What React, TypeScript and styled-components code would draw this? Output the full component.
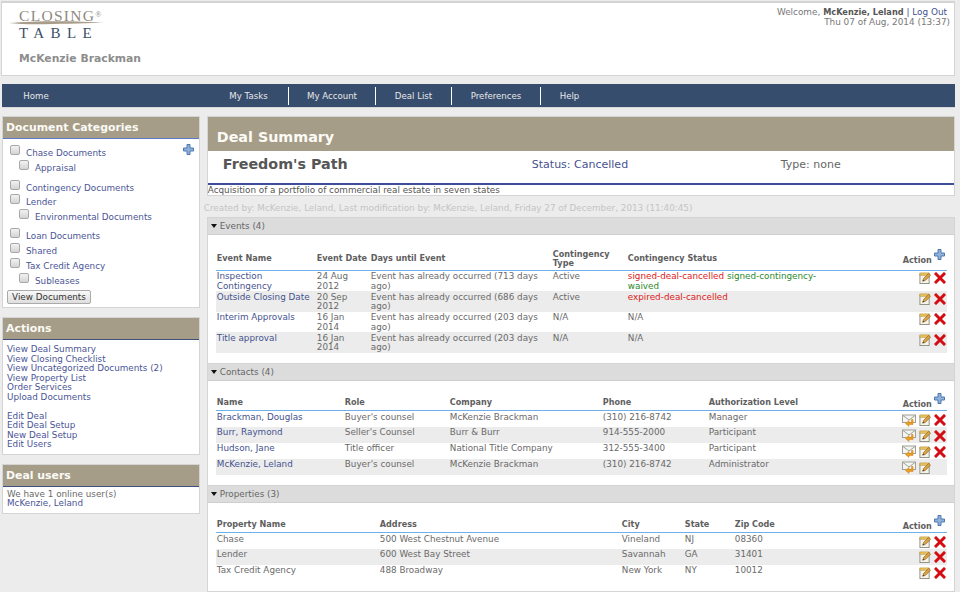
import React from 'react';
import styled, { createGlobalStyle } from 'styled-components';

const GlobalStyle = createGlobalStyle`
    html, body { margin: 0; padding: 0; background: #ececec; }
    body { width: 960px; height: 592px; overflow: hidden; font-family: "DejaVu Sans", Verdana, sans-serif; font-size: 8.8px; line-height: 9.5px; color: #6a6a6a; }
`;

const Page = styled.div`
    display: flex;
    flex-direction: column;
    padding: 1px 5px 0 1px;
`;

const Header = styled.header`
    height: 75px;
    box-sizing: border-box;
    background: #fff;
    border: 1px solid #d4d4d4;
    border-top-width: 2px;
    display: flex;
    justify-content: space-between;
    padding: 0 4px 0 9px;
`;

const LogoBox = styled.div`
    display: flex;
    flex-direction: column;
    padding-top: 6px;
`;

const Logo = styled.div`
    position: relative;
    width: 96px;
    height: 31.5px;
    font-family: "Liberation Serif", serif;
`;

const LogoTop = styled.div`
    font-size: 15.5px;
    line-height: 14px;
    letter-spacing: 1.3px;
    color: #8e8a80;
    padding-left: 8px;
    white-space: nowrap;
    sup { font-size: 8px; line-height: 0; letter-spacing: 0; vertical-align: 4px; }
`;

const LogoBottom = styled.div`
    font-size: 15px;
    line-height: 15px;
    letter-spacing: 6.4px;
    color: #3c5068;
    padding: 2.5px 0 0 8px;
`;

const Swoosh = styled.svg`
    position: absolute;
    left: -2px;
    top: 11px;
`;

const FirmName = styled.div`
    margin: 11px 0 0 8px;
    font-size: 10.8px;
    line-height: 14px;
    font-weight: bold;
    color: #8d8d8d;
`;

const Welcome = styled.div`
    padding-top: 5px;
    text-align: right;
    color: #777;
    font-size: 8.9px;
    b { color: #555; font-size: 8.2px; }
    a { color: #44508f; padding-right: 3px; }
`;

const Nav = styled.nav`
    margin: 8px 0 0 1px;
    height: 23px;
    background: #364d6e;
    display: flex;
    align-items: center;
    border: 1px solid #d8d8d8;
    border-width: 0 0 1px;
`;

const NavItem = styled.a<{ $w: number; $sep?: boolean }>`
    width: ${p => p.$w}px;
    box-sizing: border-box;
    height: 18px;
    line-height: 18px;
    text-align: center;
    color: #e8e8e8;
    font-size: 8.6px;
    border-right: ${p => (p.$sep ? '1px solid #fff' : '0')};
`;

const NavSpacer = styled.div`
    width: 139px;
`;

const Columns = styled.div`
    display: flex;
    gap: 7px;
    margin: 8px 0 0 1px;
    align-items: flex-start;
`;

const Sidebar = styled.aside`
    width: 198px;
    display: flex;
    flex-direction: column;
    gap: 9px;
`;

const Panel = styled.section`
    background: #fff;
    border: 1px solid #d4d4d4;
    box-sizing: border-box;
`;

const PanelTitle = styled.h3<{ $line: string }>`
    margin: 0;
    height: 22px;
    line-height: 21px;
    box-sizing: border-box;
    padding-left: 3px;
    background: #a69d88;
    border-bottom: 1px solid ${p => p.$line};
    color: #fbfaf5;
    font-size: 10.9px;
    font-weight: bold;
`;

const PanelBody = styled.div`
    position: relative;
    padding: 5px 4px 4px;
    a { color: #4a5596; }
`;

const UsersBody = styled(PanelBody)`
    padding-top: 3px;
`;

const CategoryBody = styled(PanelBody)`
    height: 168px;
    box-sizing: border-box;
    padding-top: 6px;
`;

const Category = styled.div<{ $sub?: boolean; $gap?: number }>`
    display: flex;
    align-items: flex-start;
    gap: 6px;
    height: 15px;
    margin-left: ${p => (p.$sub ? 12 : 3)}px;
    margin-top: ${p => p.$gap ?? 0}px;
    a { padding-top: 4px; }
`;

const Check = styled.span`
    width: 8px;
    height: 8px;
    flex: none;
    border: 1px solid #a8a8a8;
    border-radius: 2px;
    background: linear-gradient(#f2f2f2, #d4d4d4);
`;

const SideAdd = styled.span`
    position: absolute;
    right: 5px;
    top: 5px;
    line-height: 0;
`;

const ViewButton = styled.button`
    display: block;
    margin: 2px 0 0 0;
    width: 84px;
    height: 14px;
    padding: 0;
    font: inherit;
    line-height: 11px;
    color: #333;
    background: linear-gradient(#f8f8f8, #dedede);
    border: 1px solid #aaa;
    border-radius: 2px;
`;

const LinkList = styled.div<{ $gap?: boolean }>`
    display: flex;
    flex-direction: column;
    margin-top: ${p => (p.$gap ? 9.5 : 0)}px;
`;

const Main = styled.main`
    width: 749px;
    display: flex;
    flex-direction: column;
`;

const SummaryTitle = styled.h2`
    margin: 0;
    height: 34px;
    box-sizing: border-box;
    padding: 11px 0 0 9px;
    background: #a69d88;
    color: #fbfaf5;
    font-size: 14.3px;
    line-height: 18px;
`;

const DealRow = styled.div`
    display: flex;
    align-items: center;
    height: 34px;
    box-sizing: border-box;
    padding: 0 0 4px 15px;
    border-bottom: 2px solid #3d4f99;
    font-size: 11px;
    color: #46528f;
`;

const DealName = styled.div`
    width: 309px;
    font-size: 14.3px;
    font-weight: bold;
    color: #565656;
`;

const DealStatus = styled.div`
    width: 249px;
`;

const DealType = styled.div`
    color: #666;
`;

const DealNote = styled.div`
    height: 10px;
    line-height: 11px;
    color: #555;
`;

const Created = styled.div`
    margin: 8px 0 3px -3px;
    color: #c4c4c4;
`;

const Section = styled.section`
    background: #fff;
    border: 1px solid #d4d4d4;
    border-width: 1px 1px 0;
    padding-bottom: 10px;
    &:last-child {
        border-bottom-width: 1px;
    }
`;

const SectionHead = styled.div`
    height: 16px;
    background: #dcdcdc;
    border-bottom: 1px solid #cfcfcf;
    line-height: 16px;
    padding-left: 3px;
    color: #666;
    display: flex;
    align-items: center;
    gap: 3px;
    &::before {
        content: '';
        border: 3.5px solid transparent;
        border-top: 4px solid #111;
        border-bottom: 0;
    }
`;

const Table = styled.table`
    table-layout: fixed;
    width: 731px;
    margin: 14px 0 0 8px;
    border-collapse: collapse;
    border-spacing: 0;
`;

const Col = styled.col<{ $w: number }>`
    width: ${p => p.$w}px;
`;

const Th = styled.th<{ $right?: boolean }>`
    height: 16px;
    padding: 1px;
    box-sizing: border-box;
    vertical-align: middle;
    text-align: ${p => (p.$right ? 'right' : 'left')};
    font-weight: bold;
    color: #5e5e5e;
    border-bottom: 1px solid #6db0ea;
    font-size: 8.1px;
`;

const Row = styled.tr<{ $alt: boolean; $h: number }>`
    height: ${p => p.$h}px;
    background: ${p => (p.$alt ? '#ececec' : '#fff')};
`;

const Td = styled.td`
    padding: 1.5px 3px 0 1px;
    vertical-align: top;
    a { color: #46528f; }
`;

const Actions = styled.div<{ $top: number }>`
    display: flex;
    justify-content: flex-end;
    align-items: center;
    gap: 3px;
    padding-top: ${p => p.$top}px;
    margin-right: -2px;
`;

const ActionHead = styled.div`
    position: relative;
    display: inline-block;
    padding-right: 14px;
    margin-top: 4px;
    span { line-height: 0; position: absolute; right: 1px; top: -7px; }
`;

const Red = styled.span`
    color: #dd2020;
`;

const Green = styled.span`
    color: #2b8a2b;
`;

const PlusIcon = () => (
    <svg width="11" height="11" viewBox="0 0 11 11">
        <path d="M4 .5h3V4h3.5v3H7v3.5H4V7H.5V4H4z" fill="#8eb1da" stroke="#4f78b0" strokeWidth="1" />
    </svg>
);

const EditIcon = () => (
    <svg width="12" height="12" viewBox="0 0 13 13">
        <rect x="1" y="2" width="10" height="10.5" fill="#f5f3ea" stroke="#8c8c80" />
        <rect x="1" y="1" width="10" height="2.5" fill="#e8c25a" stroke="#b8913a" strokeWidth=".6" />
        <path d="M4 10l1-3 5.5-5.5 2 2L7 9z" fill="#d9a441" stroke="#8a5c1c" strokeWidth=".7" />
        <path d="M4 10l.5-1.6 1.2 1.1z" fill="#333" />
    </svg>
);

const DeleteIcon = () => (
    <svg width="12" height="12" viewBox="0 0 12 12">
        <path d="M2 2l8 8M10 2l-8 8" stroke="#d40d12" strokeWidth="3" strokeLinecap="square" />
    </svg>
);

const MailIcon = () => (
    <svg width="14" height="13" viewBox="0 0 14 13">
        <rect x=".5" y="1" width="13" height="7.5" fill="#f4f4f0" stroke="#a0a098" />
        <path d="M1 1.5l6 4.5 6-4.5" fill="none" stroke="#a0a098" />
        <path d="M9.5 5.5v3H7V6.5L3.5 9.5 7 12.5V10.5h4V5.5z" fill="#f0a020" stroke="#cc7a10" strokeWidth=".5" />
    </svg>
);

const RowActions = ({ mail, del = true, top = 1 }: { mail?: boolean; del?: boolean; top?: number }) => (
    <Actions $top={top}>
        {mail && <MailIcon />}
        <EditIcon />
        {del ? <DeleteIcon /> : <svg width="12" height="12" />}
    </Actions>
);

const ActionHeader = () => (
    <ActionHead>
        Action
        <span><PlusIcon /></span>
    </ActionHead>
);

const docCategories = [
    { name: 'Chase Documents' },
    { name: 'Appraisal', sub: true },
    { name: 'Contingency Documents', gap: 5 },
    { name: 'Lender', gap: -1 },
    { name: 'Environmental Documents', sub: true },
    { name: 'Loan Documents', gap: 4 },
    { name: 'Shared' },
    { name: 'Tax Credit Agency' },
    { name: 'Subleases', sub: true },
];

const events = [
    ['Inspection Contingency', '24 Aug 2012', 'Event has already occurred (713 days ago)', 'Active'],
    ['Outside Closing Date', '20 Sep 2012', 'Event has already occurred (686 days ago)', 'Active'],
    ['Interim Approvals', '16 Jan 2014', 'Event has already occurred (203 days ago)', 'N/A'],
    ['Title approval', '16 Jan 2014', 'Event has already occurred (203 days ago)', 'N/A'],
];

const contacts = [
    ['Brackman, Douglas', "Buyer's counsel", 'McKenzie Brackman', '(310) 216-8742', 'Manager'],
    ['Burr, Raymond', "Seller's Counsel", 'Burr & Burr', '914-555-2000', 'Participant'],
    ['Hudson, Jane', 'Title officer', 'National Title Company', '312-555-3400', 'Participant'],
    ['McKenzie, Leland', "Buyer's counsel", 'McKenzie Brackman', '(310) 216-8742', 'Administrator'],
];

const properties = [
    ['Chase', '500 West Chestnut Avenue', 'Vineland', 'NJ', '08360'],
    ['Lender', '600 West Bay Street', 'Savannah', 'GA', '31401'],
    ['Tax Credit Agency', '488 Broadway', 'New York', 'NY', '10012'],
];

const statusCell = (i: number) => {
    if (i === 0) {
        return <><Red>signed-deal-cancelled</Red> <Green>signed-contingency-</Green><br /><Green>waived</Green></>;
    }
    if (i === 1) return <Red>expired-deal-cancelled</Red>;
    return 'N/A';
};

export default function App() {
    return (
        <Page>
            <GlobalStyle />
            <Header>
                <LogoBox>
                    <Logo>
                        <LogoTop>CLOSING<sup>®</sup></LogoTop>
                        <Swoosh width="96" height="6" viewBox="0 0 96 6">
                            <path d="M0 3C25 .5 70 .5 96 3 70 2.500 25 6 0 3z" fill="#a89c8a" />
                        </Swoosh>
                        <LogoBottom>TABLE</LogoBottom>
                    </Logo>
                    <FirmName>McKenzie Brackman</FirmName>
                </LogoBox>
                <Welcome>
                    Welcome, <b>McKenzie, Leland</b> <a>| Log Out</a><br />
                    Thu 07 of Aug, 2014 (13:37)
                </Welcome>
            </Header>

            <Nav>
                <NavItem $w={68}>Home</NavItem>
                <NavSpacer />
                <NavItem $w={80} $sep>My Tasks</NavItem>
                <NavItem $w={87} $sep>My Account</NavItem>
                <NavItem $w={76} $sep>Deal List</NavItem>
                <NavItem $w={89} $sep>Preferences</NavItem>
                <NavItem $w={57}>Help</NavItem>
            </Nav>

            <Columns>
                <Sidebar>
                    <Panel>
                        <PanelTitle $line="#5f78c8">Document Categories</PanelTitle>
                        <CategoryBody>
                            <SideAdd><PlusIcon /></SideAdd>
                            {docCategories.map(c => (
                                <Category key={c.name} $sub={c.sub} $gap={c.gap}>
                                    <Check />
                                    <a>{c.name}</a>
                                </Category>
                            ))}
                            <ViewButton>View Documents</ViewButton>
                        </CategoryBody>
                    </Panel>
                    <Panel>
                        <PanelTitle $line="#3d4f7a">Actions</PanelTitle>
                        <PanelBody>
                            <LinkList>
                                <a>View Deal Summary</a>
                                <a>View Closing Checklist</a>
                                <a>View Uncategorized Documents (2)</a>
                                <a>View Property List</a>
                                <a>Order Services</a>
                                <a>Upload Documents</a>
                            </LinkList>
                            <LinkList $gap>
                                <a>Edit Deal</a>
                                <a>Edit Deal Setup</a>
                                <a>New Deal Setup</a>
                                <a>Edit Users</a>
                            </LinkList>
                        </PanelBody>
                    </Panel>
                    <Panel>
                        <PanelTitle $line="#3d4f7a">Deal users</PanelTitle>
                        <UsersBody>
                            We have 1 online user(s)<br />
                            <a>McKenzie, Leland</a>
                        </UsersBody>
                    </Panel>
                </Sidebar>

                <Main>
                    <Panel>
                        <SummaryTitle>Deal Summary</SummaryTitle>
                        <DealRow>
                            <DealName>Freedom's Path</DealName>
                            <DealStatus>Status: Cancelled</DealStatus>
                            <DealType>Type: none</DealType>
                        </DealRow>
                        <DealNote>Acquisition of a portfolio of commercial real estate in seven states</DealNote>
                    </Panel>
                    <Created>Created by: McKenzie, Leland, Last modification by: McKenzie, Leland, Friday 27 of December, 2013 (11:40:45)</Created>

                    <Section>
                        <SectionHead>Events (4)</SectionHead>
                        <Table>
                            <colgroup>
                                <Col $w={100} /><Col $w={54} /><Col $w={182} /><Col $w={75} /><Col $w={200} /><Col $w={120} />
                            </colgroup>
                            <thead>
                                <tr>
                                    <Th>Event Name</Th><Th>Event Date</Th><Th>Days until Event</Th><Th>Contingency Type</Th><Th>Contingency Status</Th>
                                    <Th $right><ActionHeader /></Th>
                                </tr>
                            </thead>
                            <tbody>
                                {events.map((e, i) => (
                                    <Row key={e[0]} $alt={i % 2 === 1} $h={20.6}>
                                        <Td><a>{e[0]}</a></Td>
                                        <Td>{e[1]}</Td>
                                        <Td>{e[2]}</Td>
                                        <Td>{e[3]}</Td>
                                        <Td>{statusCell(i)}</Td>
                                        <Td><RowActions top={0} /></Td>
                                    </Row>
                                ))}
                            </tbody>
                        </Table>
                    </Section>

                    <Section>
                        <SectionHead>Contacts (4)</SectionHead>
                        <Table>
                            <colgroup>
                                <Col $w={128} /><Col $w={105} /><Col $w={153} /><Col $w={106} /><Col $w={150} /><Col $w={89} />
                            </colgroup>
                            <thead>
                                <tr>
                                    <Th>Name</Th><Th>Role</Th><Th>Company</Th><Th>Phone</Th><Th>Authorization Level</Th>
                                    <Th $right><ActionHeader /></Th>
                                </tr>
                            </thead>
                            <tbody>
                                {contacts.map((c, i) => (
                                    <Row key={c[0]} $alt={i % 2 === 1} $h={16}>
                                        <Td><a>{c[0]}</a></Td>
                                        <Td>{c[1]}</Td>
                                        <Td>{c[2]}</Td>
                                        <Td>{c[3]}</Td>
                                        <Td>{c[4]}</Td>
                                        <Td><RowActions mail del={i < 3} /></Td>
                                    </Row>
                                ))}
                            </tbody>
                        </Table>
                    </Section>

                    <Section>
                        <SectionHead>Properties (3)</SectionHead>
                        <Table>
                            <colgroup>
                                <Col $w={163} /><Col $w={242} /><Col $w={63} /><Col $w={50} /><Col $w={80} /><Col $w={133} />
                            </colgroup>
                            <thead>
                                <tr>
                                    <Th>Property Name</Th><Th>Address</Th><Th>City</Th><Th>State</Th><Th>Zip Code</Th>
                                    <Th $right><ActionHeader /></Th>
                                </tr>
                            </thead>
                            <tbody>
                                {properties.map((p, i) => (
                                    <Row key={p[0]} $alt={i % 2 === 1} $h={16}>
                                        <Td>{p[0]}</Td>
                                        <Td>{p[1]}</Td>
                                        <Td>{p[2]}</Td>
                                        <Td>{p[3]}</Td>
                                        <Td>{p[4]}</Td>
                                        <Td><RowActions /></Td>
                                    </Row>
                                ))}
                            </tbody>
                        </Table>
                    </Section>
                </Main>
            </Columns>
        </Page>
    );
}
